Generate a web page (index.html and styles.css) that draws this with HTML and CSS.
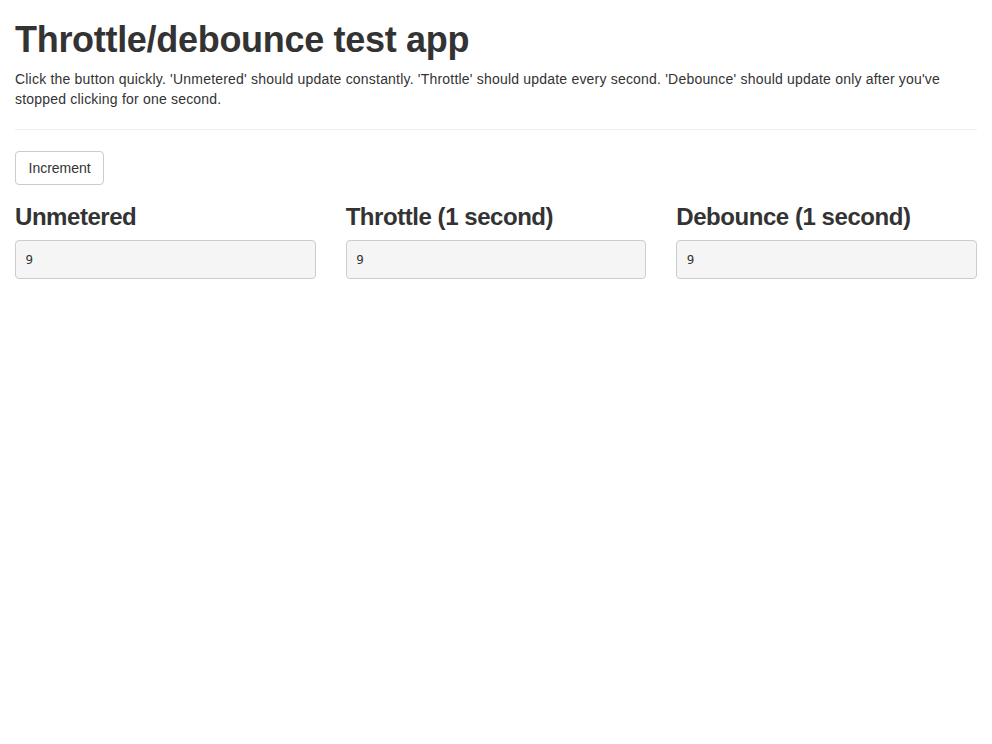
FILE: index.html
```html
<!DOCTYPE html>
<html>
<head>
<meta charset="utf-8">
<title>Throttle/debounce test app</title>
<link rel="stylesheet" href="styles.css">
</head>
<body>
<div class="container">
  <h2 class="title">Throttle/debounce test app</h2>
  <p class="lead-text">Click the button quickly. 'Unmetered' should update constantly. 'Throttle' should update every second. 'Debounce' should update only after you've stopped clicking for one second.</p>
  <hr class="divider">
  <button class="btn" type="button">Increment</button>
  <div class="row">
    <div class="col">
      <h3 class="col-title">Unmetered</h3>
      <pre class="output">9</pre>
    </div>
    <div class="col">
      <h3 class="col-title">Throttle (1 second)</h3>
      <pre class="output">9</pre>
    </div>
    <div class="col">
      <h3 class="col-title">Debounce (1 second)</h3>
      <pre class="output">9</pre>
    </div>
  </div>
</div>
</body>
</html>
```

FILE: styles.css
```css
* { box-sizing: border-box; }
html, body { margin: 0; padding: 0; background: #fff; }
body {
  font-family: "Liberation Sans", Arial, sans-serif;
  font-size: 14px;
  line-height: 20px;
  color: #333;
}
.container { padding: 0 15px; }
.title {
  margin: 20px 0 10px;
  font-size: 36px;
  font-weight: 700;
  line-height: 39px;
  letter-spacing: -0.3px;
}
.lead-text { margin: 0 0 10px; font-size: 14px; letter-spacing: 0.2px; }
.divider {
  margin: 20px 0 21px;
  border: 0;
  border-top: 1px solid #eee;
  height: 0;
}
.btn {
  display: inline-block;
  vertical-align: top;
  margin: 0;
  padding: 6px 12px 6px 12.5px;
  font-family: inherit;
  font-size: 14px;
  line-height: 20px;
  color: #333;
  background: #fff;
  border: 1px solid #ccc;
  border-radius: 4px;
  cursor: pointer;
}
.row {
  display: grid;
  grid-template-columns: repeat(3, 1fr);
  margin: 0 -15px;
}
.col { padding: 0 15px; }
.col-title {
  margin: 19px 0 10px;
  font-size: 24px;
  font-weight: 700;
  line-height: 26px;
  letter-spacing: -0.45px;
}
.output {
  margin: 0 0 10px;
  padding: 9.5px;
  font-family: "DejaVu Sans Mono", "Liberation Mono", monospace;
  font-size: 12.5px;
  line-height: 18px;
  color: #333;
  background: #f5f5f5;
  border: 1px solid #ccc;
  border-radius: 4px;
}
```
